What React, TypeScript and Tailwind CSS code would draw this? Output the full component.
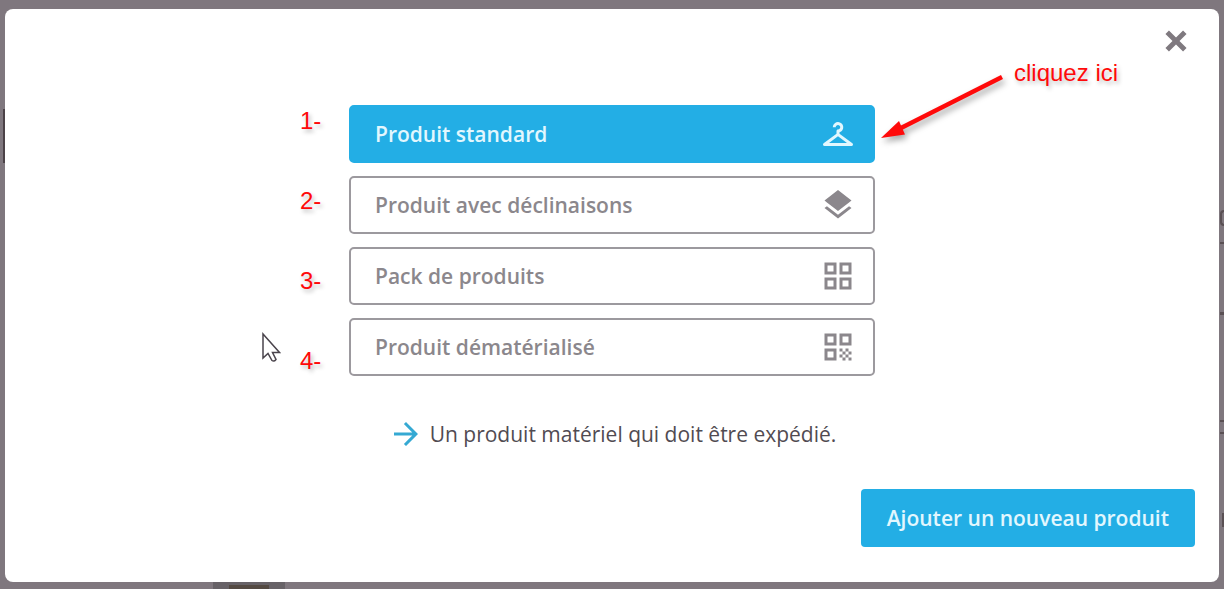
import { useState } from "react";
import type { IconType } from "react-icons";
import {
  MdArrowForward,
  MdCheckroom,
  MdGridView,
  MdLayers,
  MdQrCode,
} from "react-icons/md";

type ProductType = {
  id: string;
  label: string;
  description: string;
  icon: IconType;
};

const productTypes: ProductType[] = [
  {
    id: "standard",
    label: "Produit standard",
    description: "Un produit matériel qui doit être expédié.",
    icon: MdCheckroom,
  },
  {
    id: "combinations",
    label: "Produit avec déclinaisons",
    description: "Un produit avec différentes variations.",
    icon: MdLayers,
  },
  {
    id: "pack",
    label: "Pack de produits",
    description: "Un ensemble de produits de votre catalogue.",
    icon: MdGridView,
  },
  {
    id: "virtual",
    label: "Produit dématérialisé",
    description: "Un produit immatériel, sans expédition.",
    icon: MdQrCode,
  },
];

const annotation =
  "font-['Liberation_Sans',sans-serif] text-2xl text-[#ff0a0a] [text-shadow:2px_3px_4px_rgb(0_0_0/0.25)]";

function Annotations() {
  return (
    <div className="pointer-events-none">
      {/* Numéros */}
      <div
        className={`absolute -left-[49px] top-0 flex flex-col gap-12 ${annotation}`}
      >
        <span>1-</span>
        <span>2-</span>
        <span>3-</span>
        <span>4-</span>
      </div>

      {/* Flèche */}
      <svg
        className="absolute left-full -top-10 h-[90px] w-[140px] overflow-visible drop-shadow-[2px_4px_3px_rgb(0_0_0/0.35)]"
        viewBox="0 0 140 90"
        aria-hidden="true"
      >
        <path d="M127 12L26 63" stroke="#ff0a0a" strokeWidth="4.500" />
        <path d="M6 73L24 56L30 69.500Z" fill="#ff0a0a" />
      </svg>
      <span
        className={`absolute left-full -top-12 ml-[139px] whitespace-nowrap ${annotation}`}
      >
        cliquez ici
      </span>

      {/* Curseur */}
      <svg
        className="absolute -left-[88px] top-[227px] h-8 w-5"
        viewBox="0 0 20 32"
        aria-hidden="true"
      >
        <path
          d="M2 2V26L7 21.500L11 28.500Q13 30 15 27.500L11.500 20.500H18.500Z"
          fill="white"
          stroke="#4a444c"
          strokeWidth="1.500"
        />
      </svg>
    </div>
  );
}

/* Morceaux de la page visibles autour de la fenêtre */
function Backdrop() {
  return (
    <div aria-hidden="true">
      <div className="absolute left-[3px] top-[109px] h-[54px] w-0.5 bg-[#4b4247]" />
      <div className="absolute bottom-0 left-[213px] flex h-[7px] w-[72px] items-end justify-center bg-[#676267]">
        <div className="h-1 w-10 bg-[#544a43]" />
      </div>
      <div className="absolute right-0 top-[210px] h-4 w-1 rounded-l-full border-2 border-r-0 border-[#5a5054]" />
      <div className="absolute right-0 top-[242px] h-0.5 w-1 bg-[#5a5054]" />
      <div className="absolute right-0 top-[312px] h-[3px] w-1 bg-[#5a5054]" />
      <div className="absolute right-0 top-[420px] h-3.5 w-1 border-y-2 border-[#5a5054]" />
      <div className="absolute right-0 top-[513px] h-3.5 w-0.5 bg-[#5a5054]" />
    </div>
  );
}

export default function App() {
  const [selected, setSelected] = useState(productTypes[0]);

  return (
    <div className="relative flex min-h-screen flex-col overflow-hidden bg-[#7f777e] px-[5px] pb-[7px] pt-[9px] font-['Open_Sans',sans-serif] text-[21px] leading-8">
      <Backdrop />
      <div
        role="dialog"
        aria-label="Ajouter un nouveau produit"
        className="relative flex grow flex-col rounded-lg bg-white px-6 pb-[35px] pt-4"
      >
        <button
          type="button"
          aria-label="Fermer"
          className="mr-[3px] flex size-8 items-center justify-center self-end text-[#7f797f]"
        >
          <svg className="size-[22px]" viewBox="0 0 20 20" aria-hidden="true">
            <path
              d="M2 2L18 18M18 2L2 18"
              stroke="currentColor"
              strokeWidth="4.500"
            />
          </svg>
        </button>

        <div className="relative mx-auto mt-12 w-full max-w-[526px]">
          <div className="flex flex-col gap-[13px]">
            {productTypes.map((type) => {
              const Icon = type.icon;
              const active = type.id === selected.id;
              return (
                <button
                  key={type.id}
                  type="button"
                  aria-pressed={active}
                  onClick={() => setSelected(type)}
                  className={`flex h-[58px] items-center justify-between rounded-[5px] border-2 pl-6 pr-[17px] font-semibold ${
                    active
                      ? "border-[#23aee5] bg-[#23aee5] text-[#e2f7fe]"
                      : "border-[#9c999e] bg-white text-[#8b878c]"
                  }`}
                >
                  {type.label}
                  <Icon className="size-9" aria-hidden="true" />
                </button>
              );
            })}
          </div>
          <Annotations />
        </div>

        <p className="mt-10 flex items-center justify-center gap-1.5 text-[#514b52]">
          <MdArrowForward className="size-9 text-[#35a9d3]" aria-hidden="true" />
          {selected.description}
        </p>

        <button
          type="button"
          className="mt-auto h-[58px] self-end rounded-[4px] bg-[#23aee5] px-[26px] font-semibold text-[#e2f7fe]"
        >
          Ajouter un nouveau produit
        </button>
      </div>
    </div>
  );
}
